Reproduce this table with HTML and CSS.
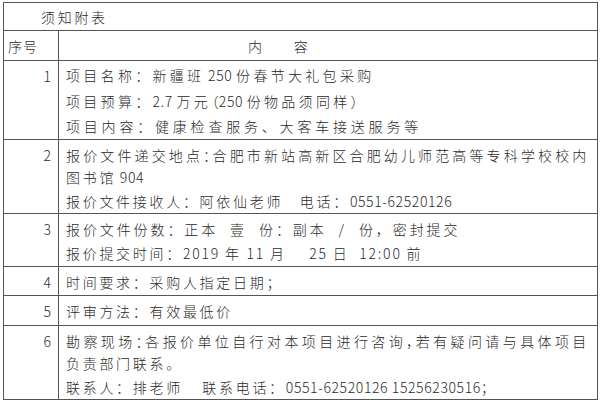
FILE: index.html
```html
<!DOCTYPE html>
<html lang="zh-CN">
<head>
<meta charset="utf-8">
<title>须知附表</title>
<link rel="stylesheet" href="styles.css">
</head>
<body>
<table class="sheet">
  <colgroup><col class="col-no"><col class="col-body"></colgroup>
  <tr class="r-title"><td colspan="2" class="title">须知附表</td></tr>
  <tr class="r-head"><td class="head-no">序号</td><td class="head-body">内&ensp;&ensp;&ensp;容</td></tr>
  <tr class="r1">
    <td class="no">1</td>
    <td class="body loose">
      <p>项目名称：新疆班<span class="n"> 250 </span>份春节大礼包采购</p>
      <p>项目预算：<span class="n">2.7 </span>万<span class="pp">元</span><span class="p0">（</span><span class="n">250 </span>份物品须同样）</p>
      <p class="wide">项目内容：健康检查服务、大客车接送服务等</p>
    </td>
  </tr>
  <tr class="r2">
    <td class="no">2</td>
    <td class="body">
      <p><span class="jline">报价文件递交地点<span class="np">：</span>合肥市新站高新区合肥幼儿师范高等专科学校校内</span>图书馆<span class="n"> 904</span></p>
      <p>报价文件接收人：阿依仙老师&emsp;电话：<span class="n">0551-62520126</span></p>
    </td>
  </tr>
  <tr class="r3">
    <td class="no">3</td>
    <td class="body">
      <p class="mid">报价文件份数：正本&nbsp;&nbsp;壹&nbsp;&nbsp;份：副本&nbsp;&nbsp;/&nbsp;&nbsp;份，密封提交</p>
      <p>报价提交时间：<span class="n2">2019 </span>年<span class="n2"> 11 </span>月<span class="n2">&ensp;&ensp; 25 </span>日<span class="n2">&nbsp; 12:00 </span>前</p>
    </td>
  </tr>
  <tr class="r4">
    <td class="no">4</td>
    <td class="body"><p>时间要求：采购人指定日期；</p></td>
  </tr>
  <tr class="r5">
    <td class="no">5</td>
    <td class="body"><p>评审方法：有效最低价</p></td>
  </tr>
  <tr class="r6">
    <td class="no">6</td>
    <td class="body">
      <p><span class="jline">勘察现场<span class="np">：</span>各报价单位自行对本项目进行咨询<span class="np">，</span>若有疑问请与具体项目</span>负责部门联系。</p>
      <p>联系人：排老师&ensp;&ensp;联系电话：<span class="n">0551-62520126 15256230516</span>；</p>
    </td>
  </tr>
</table>
</body>
</html>
```

FILE: styles.css
```css
html, body {
  margin: 0;
  padding: 0;
  background: #ffffff;
}

body {
  font-family: "Noto Sans CJK SC", "Noto Sans", sans-serif;
  font-size: 14px;
  font-weight: 300;
  color: #2a2a2a;
}

.sheet {
  border-collapse: collapse;
  margin: 2px 0 0 3px;
  width: 595px;
  table-layout: fixed;
  border: 1px solid #3a3a3a;
}

.col-no { width: 55px; }

.sheet td {
  border: 1px solid #555555;
  padding: 0;
  vertical-align: top;
  letter-spacing: 2.7px;
}

.r-title { height: 28px; }
.r-head { height: 30px; }

.title {
  padding-left: 37px !important;
  vertical-align: middle !important;
}

.head-no {
  padding-left: 4px !important;
  letter-spacing: 1px !important;
  vertical-align: middle !important;
}

.head-body {
  padding-left: 189px !important;
  vertical-align: middle !important;
}

.no {
  text-align: right;
  padding: 4px 7px 0 0 !important;
  line-height: 22px;
  letter-spacing: 0 !important;
}

.body {
  padding: 4px 8px 1px 7px !important;
}

.body p {
  margin: 0;
  line-height: 22px;
}

.body p + p {
  margin-top: 2px;
}

.loose {
  padding-top: 2px !important;
  padding-bottom: 0 !important;
  letter-spacing: 3.3px !important;
}

.loose p {
  line-height: 24.5px;
}

.loose p + p {
  margin-top: 1px;
}

.wide {
  letter-spacing: 3.8px;
}

.mid {
  letter-spacing: 2.9px;
}

.n {
  letter-spacing: 0.6px;
}

.n2 {
  letter-spacing: 1.8px;
}

.pp {
  letter-spacing: -3px;
}

.p0 {
  letter-spacing: 0;
}

.np {
  letter-spacing: -5px;
}

.jline {
  display: block;
  text-align: justify;
  text-align-last: justify;
}

.r1 { height: 79px; }
.r2 { height: 73px; }
.r3 { height: 53px; }
.r4 { height: 29px; }
.r5 { height: 30px; }
.r6 { height: 73px; }
```
